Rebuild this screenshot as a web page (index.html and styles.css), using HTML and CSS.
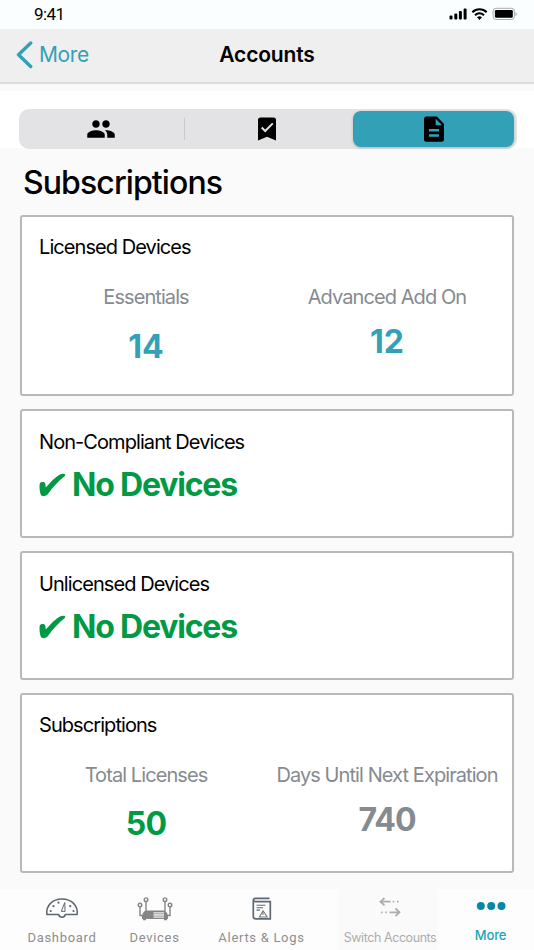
FILE: index.html
```html
<!DOCTYPE html>
<html lang="en">
<head>
  <meta charset="UTF-8">
  <title>Accounts</title>
  <link rel="stylesheet" href="styles.css">
</head>
<body>
  <div class="status">
    <span class="time">9:41</span>
    <svg class="status-icons" width="70" height="14" viewBox="0 0 70 14">
      <rect x="0.5" y="8.5" width="3" height="4" rx="1"/>
      <rect x="5.3" y="6.5" width="3" height="6" rx="1"/>
      <rect x="9.9" y="4" width="3" height="8.5" rx="1"/>
      <rect x="14.6" y="1.5" width="3" height="11" rx="1"/>
      <g fill="none" stroke="#000" stroke-width="2">
        <path d="M23.3 5.2a10.3 10.3 0 0 1 14.4 0"/>
        <path d="M26 8.2a6.4 6.4 0 0 1 9 0"/>
      </g>
      <path d="M28 10.2a3.9 3.9 0 0 1 5 0L30.500 13z"/>
      <rect x="44.100" y="1.300" width="21.300" height="11.200" rx="2.800" fill="none" stroke="#aaa"/>
      <rect x="45.900" y="3.100" width="17.900" height="7.600" rx="1.200"/>
      <path d="M66.500 5v4q1.300-.4 1.300-2t-1.300-2z" fill="#aaa"/>
    </svg>
  </div>

  <header>
    <a class="back" href="#">
      <svg width="17" height="28" viewBox="0 0 17 28"><path d="M14.700 2 2.500 13.700l12.200 11.800" fill="none" stroke="#32a1b8" stroke-width="3.400" stroke-linecap="round" stroke-linejoin="round"/></svg>
      <span>More</span>
    </a>
    <h1>Accounts</h1>
  </header>

  <div class="segment-bar">
    <div class="segments">
      <div class="segment users">
        <svg width="30" height="30" viewBox="0 0 24 24"><path d="M16 11c1.660 0 2.990-1.340 2.990-3S17.660 5 16 5s-3 1.340-3 3 1.340 3 3 3zm-8 0c1.660 0 2.990-1.340 2.990-3S9.660 5 8 5 5 6.340 5 8s1.340 3 3 3zm0 2c-2.330 0-7 1.170-7 3.500V19h14v-2.500C15 14.170 10.330 13 8 13zm8 0c-.29 0-.62.02-.97.05 1.160.84 1.970 1.970 1.970 3.450V19h6v-2.500c0-2.330-4.670-3.500-7-3.500z"/></svg>
      </div>
      <div class="divider"></div>
      <div class="segment bookmark">
        <svg width="18" height="24" viewBox="0 0 18 24"><path d="M2.500.500h13q2.500 0 2.500 2.500v20.500l-9-3.800-9 3.800V3Q0 .500 2.500.500z"/><path d="M3.700 10.500 7.200 14l7.600-7.600" fill="none" stroke="#e3e3e5" stroke-width="2"/></svg>
      </div>
      <div class="segment active">
        <svg width="20" height="26" viewBox="0 0 20 26"><path d="M2.500.500H13l7 7.500v15.300q0 2.500-2.500 2.500h-15q-2.500 0-2.500-2.500V3Q0 .500 2.500.500z"/><path d="M11.700 2.700v6.600h6.400z" fill="#32a1b8"/><path d="M5 14.300h10M5 19.500h10" stroke="#32a1b8" stroke-width="2.400"/></svg>
      </div>
    </div>
  </div>

  <main>
    <h2>Subscriptions</h2>

    <section class="card stats">
      <h3>Licensed Devices</h3>
      <div class="columns">
        <div class="stat">
          <p>Essentials</p>
          <strong class="low">14</strong>
        </div>
        <div class="stat">
          <p>Advanced Add On</p>
          <strong>12</strong>
        </div>
      </div>
    </section>

    <section class="card">
      <h3>Non-Compliant Devices</h3>
      <div class="none">
        <svg width="27" height="24" viewBox="0 0 27 24"><path d="M.8 10.500C1.500 8.700 5 8.500 6 9.900c.6 1.200.5 2.800.9 4.600C11.500 9 17 3.500 21.500 1.300c1.500-.7 4.100-.9 4.700.1.300.8-.3 1.500-.9 2.100C19 8.500 14 14 9.300 20.400 7.500 23 3.300 24.300 2 22 .7 19.500.1 13.500.8 10.500z"/></svg>
        <span>No Devices</span>
      </div>
    </section>

    <section class="card">
      <h3>Unlicensed Devices</h3>
      <div class="none">
        <svg width="27" height="24" viewBox="0 0 27 24"><path d="M.8 10.500C1.500 8.700 5 8.500 6 9.900c.6 1.200.5 2.800.9 4.600C11.500 9 17 3.500 21.500 1.300c1.500-.7 4.100-.9 4.700.1.300.8-.3 1.500-.9 2.100C19 8.500 14 14 9.300 20.400 7.500 23 3.300 24.300 2 22 .7 19.500.1 13.500.8 10.500z"/></svg>
        <span>No Devices</span>
      </div>
    </section>

    <section class="card stats last">
      <h3>Subscriptions</h3>
      <div class="columns">
        <div class="stat">
          <p>Total Licenses</p>
          <strong class="low green">50</strong>
        </div>
        <div class="stat">
          <p>Days Until Next Expiration</p>
          <strong class="gray">740</strong>
        </div>
      </div>
    </section>
  </main>

  <nav class="tabs">
    <a class="tab" href="#">
      <svg width="34" height="22" viewBox="0 0 34 22" fill="none" stroke="#5c6873" stroke-width="1.500">
        <path d="M1.800 17.500C.8 8.500 7.500 2 17 2s16.200 6.500 15.200 15.500H20.300q-.6 2.700-3.300 2.700t-3.300-2.700z" stroke-linejoin="round"/>
        <path d="m16.300 14.300 3.500-8.800.2 9z" stroke-width="1"/>
        <g fill="#5c6873" stroke="none"><circle cx="5.700" cy="14" r="1.100"/><circle cx="8.500" cy="9.200" r="1.100"/><circle cx="13.500" cy="5.700" r="1.100"/><circle cx="25.200" cy="9.200" r="1.100"/><circle cx="28.500" cy="14" r="1.100"/></g>
      </svg>
      <span>Dashboard</span>
    </a>
    <a class="tab" href="#">
      <svg width="36" height="24" viewBox="0 0 36 24" fill="none" stroke="#858585" stroke-width="1.400">
        <circle cx="3" cy="8" r="1.800"/><circle cx="9" cy="2.700" r="1.800"/><circle cx="28" cy="2.700" r="1.800"/><circle cx="33" cy="8" r="1.800"/>
        <path d="M3 10v8.500h4M9 4.500V14M28 4.500V14M33 10v8.500h-4"/>
        <path d="M5 18.500q1.500-5 4.500-5h17q3 0 4.500 5V22h-1v1.300h-3V22H9v1.300H6V22H5z" fill="#858585" stroke="none"/>
        <path d="M16.500 15.800H27M16.500 18H27M16.500 20.200H27" stroke="#eee" stroke-width="1.300"/>
      </svg>
      <span>Devices</span>
    </a>
    <a class="tab" href="#">
      <svg width="20" height="24" viewBox="0 0 20 24" fill="none" stroke="#5c6873" stroke-width="1.700">
        <path d="M17.500 1.300H3.500Q1.300 1.300 1.300 3.500v16q0 2.300 2.500 2.300h14.500V4.700H3.500Q1.800 4.700 1.600 3"/>
        <path d="M4.500 8.300h9M4.500 10.700h6.500M4.500 13.100h3.500" stroke-width="1.100"/>
        <path d="m11 13.800-3.600 6.200h7.800zM11 15.500V18" stroke="#7a7a7a" stroke-width="1.100"/>
      </svg>
      <span>Alerts &amp; Logs</span>
    </a>
    <a class="tab switch" href="#">
      <svg width="22" height="22" viewBox="0 0 22 22" fill="none" stroke="#adadad" stroke-width="1.800">
        <path d="M5.500 1 1.500 4.700l4 3.700M1.500 4.700h10M16.500 11.500l4 3.800-4 3.700M20.500 15.300h-10"/>
        <path d="M13.700 4.700h1.600M18 4.700h1.600M2 15.300h1.600M6.300 15.300h1.600"/>
      </svg>
      <span>Switch Accounts</span>
    </a>
    <a class="tab more" href="#">
      <svg width="30" height="10" viewBox="0 0 30 10" fill="#0689a8"><circle cx="4.800" cy="5" r="4"/><circle cx="15.200" cy="5" r="4"/><circle cx="25.500" cy="5" r="4"/></svg>
      <span>More</span>
    </a>
  </nav>
</body>
</html>
```

FILE: styles.css
```css
* {
  box-sizing: border-box;
}
body {
  margin: 0;
  height: 950px;
  display: flex;
  flex-direction: column;
  overflow: hidden;
  background: #fafafa;
  color: #000;
  font-family: Inter, "Liberation Sans", sans-serif;
}
h1, h2, h3, p {
  margin: 0;
  font-weight: 400;
}
h1, h2, h3, p, span, strong {
  white-space: nowrap;
}
svg {
  display: block;
  flex-shrink: 0;
}
a {
  text-decoration: none;
}
.status {
  height: 29px;
  display: flex;
  justify-content: space-between;
  padding: 0 15px 0 34px;
  background: #fafefe;
}
.time {
  font: 17px/29px Roboto, sans-serif;
  letter-spacing: -0.6px;
}
.status-icons {
  margin-top: 7px;
}
header {
  height: 55px;
  display: grid;
  grid-template-columns: 1fr auto 1fr;
  align-items: center;
  padding-bottom: 2px;
  background: #efefef;
  border-bottom: 2px solid #dcdcdc;
}
header h1 {
  font-size: 21px;
  font-weight: 600;
  line-height: 50px;
  letter-spacing: -0.15px;
}
.back {
  display: flex;
  align-items: center;
  gap: 6px;
  padding-left: 16px;
  color: #32a1b8;
  font-size: 21px;
  letter-spacing: -0.4px;
}
.segment-bar {
  height: 64px;
  padding: 18px 17px 0 19px;
  background: #fff;
  border-top: 7px solid #fafafa;
}
.segments {
  height: 40px;
  display: grid;
  grid-template-columns: 165px 1px 168px 161px;
  padding: 2px 3px 2px 0;
  border-radius: 10px;
  background: #e3e3e5;
}
.segment {
  display: flex;
  align-items: center;
  justify-content: center;
}
.users {
  padding-right: 1px;
}
.bookmark {
  padding-right: 4px;
}
.divider {
  height: 22px;
  margin-top: 7px;
  background: #cacacc;
}
.active {
  border-radius: 8px;
  background: #32a1b8;
  box-shadow: 0 1px 3px #0003;
}
main {
  flex: 1;
  padding: 0 20px;
}
h2 {
  height: 67px;
  padding-left: 3px;
  font-size: 32px;
  font-weight: 500;
  line-height: 70px;
  letter-spacing: -0.9px;
}
.card {
  height: 129px;
  margin-bottom: 13px;
  padding: 20px 0 0 17px;
  background: #fff;
  border: 2px solid #b9b9b9;
  border-radius: 3px;
}
.stats {
  height: 181px;
  padding-top: 19px;
}
.last {
  height: 180px;
}
h3 {
  font-size: 20px;
  line-height: 22px;
  letter-spacing: -0.93px;
}
.columns {
  display: grid;
  grid-template-columns: 214px 1fr;
  margin-top: 28px;
}
.stat {
  display: flex;
  flex-direction: column;
  align-items: center;
  gap: 22px;
}
.stat + .stat {
  padding-left: 9px;
}
.stat p {
  color: #858b90;
  font-size: 20px;
  line-height: 22px;
  letter-spacing: -0.92px;
}
.stat strong {
  color: #32a1b8;
  font-size: 32px;
  font-weight: 700;
  line-height: 24px;
}
.stat .low {
  margin-top: 5px;
}
.stat .green {
  margin-top: 4px;
  color: #009944;
  letter-spacing: -0.8px;
}
.stat .gray {
  color: #858b90;
  letter-spacing: -1px;
}
.none {
  display: flex;
  align-items: center;
  gap: 6px;
  margin-top: 20px;
  color: #009944;
  fill: #009944;
  font-size: 32px;
  font-weight: 700;
  line-height: 24px;
  letter-spacing: -1.2px;
}
.tabs {
  height: 61px;
  display: grid;
  grid-template-columns: 124px 61px 153px 100px 96px;
  background: #fdfdfd;
}
.tab {
  display: flex;
  flex-direction: column;
  align-items: center;
  justify-content: space-between;
  padding: 8px 0 5px;
  color: #8e8e8e;
  font: 13px/15px Roboto, sans-serif;
  letter-spacing: 0.7px;
}
.switch {
  padding-left: 4px;
  background: #fafafa;
  color: #adadad;
  font-family: Inter, sans-serif;
  font-size: 12.5px;
  letter-spacing: -0.43px;
}
.more {
  padding: 12px 0 7px 9px;
  color: #1aa5b8;
  font-family: Inter, sans-serif;
  font-weight: 500;
  letter-spacing: -0.1px;
}
```
